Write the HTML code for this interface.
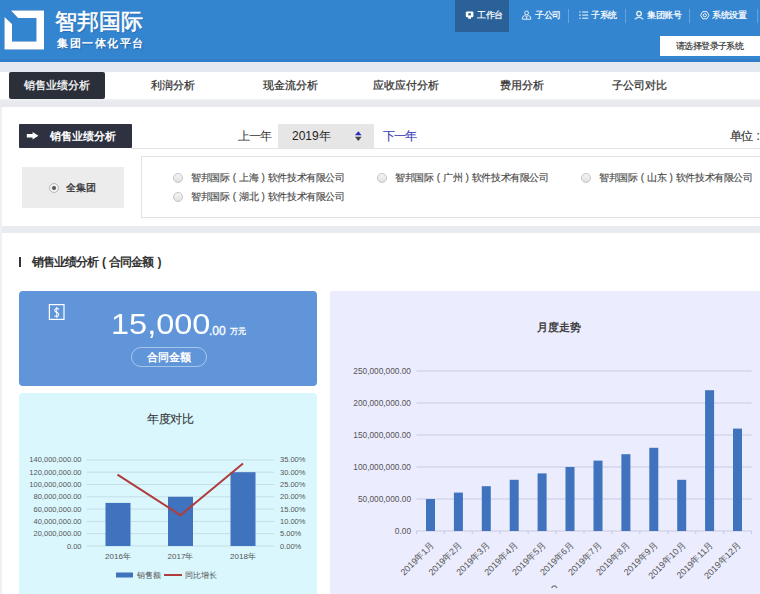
<!DOCTYPE html>
<html><head><meta charset="utf-8">
<style>
*{margin:0;padding:0;box-sizing:border-box}
html,body{width:760px;height:594px;overflow:hidden;background:#fff;font-family:"Liberation Sans",sans-serif;color:#333}
.a{position:absolute;white-space:nowrap}
#hdr{position:absolute;left:0;top:0;width:760px;height:62px;background:#3485d0}
#band1{position:absolute;left:0;top:62px;width:760px;height:10px;background:#e4e9f0}
#tabs{position:absolute;left:0;top:72px;width:760px;height:27px;background:#fff}
#band2{position:absolute;left:0;top:99px;width:760px;height:8px;background:linear-gradient(#eff1f4,#e7e9ee 35%,#e7e9ee)}
#band3{position:absolute;left:0;top:226px;width:760px;height:7px;background:#e8ebf0}
.tab{position:absolute;top:71px;height:29px;line-height:29px;font-size:11px;color:#333;-webkit-text-stroke:0.25px currentColor;text-align:center;width:116px}
.nav{position:absolute;top:0;height:32px;line-height:31px;font-size:9px;letter-spacing:-0.5px;color:#fff;-webkit-text-stroke:0.2px #fff}
.sep{position:absolute;top:9px;width:1px;height:14px;background:rgba(255,255,255,.25)}
.opt{position:absolute;font-size:10px;letter-spacing:-0.4px;color:#4a4a4a;-webkit-text-stroke:0.15px currentColor;line-height:12px}
.p{display:inline-block;width:9.6px;text-align:center;font-style:normal;font-family:"Liberation Sans",sans-serif}
.p2{display:inline-block;width:11px;text-align:center;font-style:normal}
.rad{position:absolute;width:10px;height:10px;border-radius:50%;border:1px solid #c4c4c4;background:linear-gradient(#f4f4f4,#e2e2e2)}
</style></head><body>
<div id="hdr"></div>
<div id="band1"></div>
<div id="tabs"></div>
<div id="band2"></div>
<div id="band3"></div>
<div class="a" style="left:0;top:107px;width:2px;height:487px;background:#eef0f3"></div>
<div class="a" style="left:0;top:59px;width:760px;height:3px;background:rgba(0,40,90,.07)"></div>

<!-- logo -->
<svg class="a" style="left:0;top:0;filter:drop-shadow(0.7px 0.7px 0.6px rgba(0,40,100,.45))" width="60" height="60" viewBox="0 0 60 60">
  <path d="M11 10.6 L44 10.6 L44 49.5 L4.5 49.5 L4.5 17 L12 24 L12 41.4 L36.4 41.4 L36.4 18 L18 18 Z" fill="#fff"/>
</svg>
<div class="a" style="left:55px;top:9px;font-size:22px;line-height:26px;color:#fff;-webkit-text-stroke:0.6px #fff;text-shadow:1px 1px 1px rgba(0,30,80,.3)">智邦国际</div>
<div class="a" style="left:57px;top:36px;font-size:11px;line-height:14px;color:#fff;font-weight:bold;letter-spacing:1.5px;text-shadow:1px 1px 1px rgba(0,30,80,.3)">集团一体化平台</div>

<!-- nav -->
<div class="a" style="left:455px;top:0;width:54px;height:32px;background:#2a6199"></div>
<div class="nav" style="left:477px">工作台</div>
<div class="nav" style="left:535px">子公司</div>
<div class="sep" style="left:568px"></div>
<div class="nav" style="left:591px">子系统</div>
<div class="sep" style="left:625px"></div>
<div class="nav" style="left:647px">集团账号</div>
<div class="sep" style="left:689px"></div>
<div class="nav" style="left:712px">系统设置</div>
<div class="sep" style="left:757px"></div>
<div class="a" style="left:660px;top:36px;width:110px;height:20px;background:#fff;font-size:9px;letter-spacing:-0.6px;line-height:20px;color:#333;padding-left:16px;-webkit-text-stroke:0.15px #333">请选择登录子系统</div>

<!-- tabs -->
<div class="a" style="left:9px;top:72px;width:96px;height:27px;background:#2b2f3a;border-radius:2px"></div>
<div class="tab" style="left:-1px;color:#fff">销售业绩分析</div>
<div class="tab" style="left:115px">利润分析</div>
<div class="tab" style="left:232px">现金流分析</div>
<div class="tab" style="left:348px">应收应付分析</div>
<div class="tab" style="left:464px">费用分析</div>
<div class="tab" style="left:581px">子公司对比</div>

<!-- filter -->
<div class="a" style="left:131px;top:148px;width:640px;height:1px;background:#e4e4e4"></div>
<div class="a" style="left:19px;top:124px;width:113px;height:24px;background:#2d3140;border-radius:1px"></div>
<div class="a" style="left:50px;top:124px;font-size:11px;line-height:24px;color:#fff;font-weight:bold">销售业绩分析</div>
<div class="a" style="left:237.5px;top:128px;font-size:12px;letter-spacing:-0.6px;line-height:17px;color:#333">上一年</div>
<div class="a" style="left:278px;top:124px;width:96px;height:24px;background:#e6e6e6"></div>
<div class="a" style="left:292px;top:128px;font-size:12px;line-height:17px;color:#222">2019年</div>
<div class="a" style="left:383px;top:127.5px;font-size:12px;letter-spacing:-1.1px;line-height:17px;color:#3a3cb8;-webkit-text-stroke:0.15px #3a3cb8">下一年</div>
<div class="a" style="left:730px;top:128px;font-size:12px;letter-spacing:-0.9px;line-height:17px;color:#333;-webkit-text-stroke:0.15px #333">单位<i class="p2" style="width:11px">:</i></div>

<div class="a" style="left:22px;top:167px;width:102px;height:41px;background:#ececec"></div>
<div class="rad" style="left:49px;top:182.5px;background:#f2f2f2;border-color:#b8b8b8"><div style="position:absolute;left:2px;top:2px;width:4px;height:4px;border-radius:50%;background:#555"></div></div>
<div class="a" style="left:66px;top:181px;font-size:10px;line-height:13px;color:#333;-webkit-text-stroke:0.3px #333">全集团</div>
<div class="a" style="left:141px;top:156px;width:640px;height:62px;border:1px solid #e2e2e2"></div>

<div class="rad" style="left:173px;top:173px"></div>
<div class="opt" style="left:191px;top:172px">智邦国际<i class="p">(</i>上海<i class="p">)</i>软件技术有限公司</div>
<div class="rad" style="left:377px;top:173px"></div>
<div class="opt" style="left:395px;top:172px">智邦国际<i class="p">(</i>广州<i class="p">)</i>软件技术有限公司</div>
<div class="rad" style="left:581px;top:173px"></div>
<div class="opt" style="left:599px;top:172px">智邦国际<i class="p">(</i>山东<i class="p">)</i>软件技术有限公司</div>
<div class="rad" style="left:173px;top:192px"></div>
<div class="opt" style="left:191px;top:191px">智邦国际<i class="p">(</i>湖北<i class="p">)</i>软件技术有限公司</div>

<!-- section title -->
<div class="a" style="left:19px;top:257px;width:2px;height:10px;background:#333"></div>
<div class="a" style="left:31.5px;top:255px;font-size:12px;letter-spacing:-0.9px;line-height:14px;color:#333;font-weight:bold">销售业绩分析<i class="p2">(</i>合同金额<i class="p2">)</i></div>

<!-- cards -->
<div class="a" style="left:19px;top:291px;width:298px;height:95px;background:#6096d9;border-radius:4px"></div>
<div class="a" style="left:19px;top:393px;width:298px;height:220px;background:#daf7fe;border-radius:4px"></div>
<div class="a" style="left:330px;top:291px;width:460px;height:320px;background:#ebecfd;border-radius:2px"></div>



<!-- nav icons -->
<svg class="a" style="left:0;top:0" width="760" height="160" viewBox="0 0 760 160">
  <g fill="#fff">
    <rect x="465.8" y="11.6" width="7.6" height="5.6" rx="1.2"/>
    <rect x="468.2" y="17" width="2.8" height="1.8"/>
  </g>
  <rect x="468.3" y="13.2" width="2.6" height="2.2" fill="#2a6199"/>
  <g fill="none" stroke="#e8f1fa" stroke-width="0.95">
    <circle cx="526.6" cy="12.9" r="1.9"/>
    <path d="M522.3 19.2 Q522.3 15.8 524.6 15.6 Q526.6 17.2 528.6 15.6 Q530.9 15.8 530.9 19.2 Z"/>
    <line x1="526.6" x2="526.6" y1="16.8" y2="19.2"/>
  </g>
  <g stroke="#e8f1fa" stroke-width="1.1">
    <line x1="579.2" x2="580.8" y1="12" y2="12"/><line x1="582.2" x2="588.2" y1="12" y2="12"/>
    <line x1="579.2" x2="580.8" y1="15.1" y2="15.1"/><line x1="582.2" x2="588.2" y1="15.1" y2="15.1"/>
    <line x1="579.2" x2="580.8" y1="18.2" y2="18.2"/><line x1="582.2" x2="588.2" y1="18.2" y2="18.2"/>
  </g>
  <g fill="none" stroke="#e8f1fa" stroke-width="1.3">
    <circle cx="639" cy="13.6" r="2.3"/>
    <path d="M634.8 19.4 Q639 14.8 643.2 19.4"/>
  </g>
  <g fill="none" stroke="#e8f1fa" stroke-width="1">
    <path d="M702.7 11.6 L706.9 11.6 L709 15.2 L706.9 18.8 L702.7 18.8 L700.6 15.2 Z"/>
    <circle cx="704.8" cy="15.2" r="1.6"/>
  </g>
  <!-- arrow -->
  <path d="M26.8 134 L32.6 134 L32.6 132 L38.4 135.8 L32.6 139.6 L32.6 137.6 L26.8 137.6 Z" fill="#fff"/>
  <!-- select arrows -->
  <path d="M355 135.3 L358.3 131.3 L361.6 135.3 Z" fill="#2b2bc8"/>
  <path d="M355 136.8 L358.3 141 L361.6 136.8 Z" fill="#444"/>
</svg>
<!-- blue card content -->
<svg class="a" style="left:0;top:0" width="80" height="330" viewBox="0 0 80 330">
  <rect x="49.4" y="304.6" width="14.6" height="14.8" fill="none" stroke="#fff" stroke-width="1.2"/>
  <path d="M58.9 309.2 Q56.9 307.9 55.4 308.9 Q54.1 310.2 55.3 311.5 Q56.5 312.4 57.8 313 Q59.3 314.2 58.4 315.6 Q56.8 317 54.6 315.7" fill="none" stroke="#fff" stroke-width="1.1"/>
  <line x1="56.7" x2="56.7" y1="306.9" y2="317.9" stroke="#fff" stroke-width="0.9"/>
</svg>
<div class="a" style="left:111px;top:308px;font-size:29px;line-height:32px;color:#fff;transform:scaleX(1.12);transform-origin:0 0">15,000</div>
<div class="a" style="left:209px;top:324px;font-size:12px;line-height:14px;color:#fff;-webkit-text-stroke:0.3px #fff">.00</div>
<div class="a" style="left:230px;top:325.5px;font-size:8px;line-height:12px;color:#fff;-webkit-text-stroke:0.3px #fff">万元</div>
<div class="a" style="left:131px;top:347px;width:76px;height:20px;border:1px solid rgba(255,255,255,.45);border-radius:10px;font-size:11px;line-height:18px;color:#fff;text-align:center;font-weight:bold">合同金额</div>

<div class="a" style="left:147px;top:411px;font-size:12px;letter-spacing:-0.5px;line-height:16px;color:#333;-webkit-text-stroke:0.1px #333">年度对比</div>
<div class="a" style="left:537px;top:319px;font-size:11px;line-height:16px;color:#333;-webkit-text-stroke:0.35px #333">月度走势</div>

<svg class="a" style="left:0;top:0" width="760" height="594" viewBox="0 0 760 594" font-family="Liberation Sans" >
<g font-size="7.5" fill="#555">
<line x1="86.5" x2="274" y1="546.0" y2="546.0" stroke="#c5dde6" stroke-width="1"/>
<text x="81.5" y="548.5" text-anchor="end">0.00</text>
<text x="280" y="548.5">0.00%</text>
<line x1="86.5" x2="274" y1="533.7" y2="533.7" stroke="#c5dde6" stroke-width="1"/>
<text x="81.5" y="536.2" text-anchor="end">20,000,000.00</text>
<text x="280" y="536.2">5.00%</text>
<line x1="86.5" x2="274" y1="521.4" y2="521.4" stroke="#c5dde6" stroke-width="1"/>
<text x="81.5" y="523.9" text-anchor="end">40,000,000.00</text>
<text x="280" y="523.9">10.00%</text>
<line x1="86.5" x2="274" y1="509.1" y2="509.1" stroke="#c5dde6" stroke-width="1"/>
<text x="81.5" y="511.6" text-anchor="end">60,000,000.00</text>
<text x="280" y="511.6">15.00%</text>
<line x1="86.5" x2="274" y1="496.8" y2="496.8" stroke="#c5dde6" stroke-width="1"/>
<text x="81.5" y="499.3" text-anchor="end">80,000,000.00</text>
<text x="280" y="499.3">20.00%</text>
<line x1="86.5" x2="274" y1="484.5" y2="484.5" stroke="#c5dde6" stroke-width="1"/>
<text x="81.5" y="487.0" text-anchor="end">100,000,000.00</text>
<text x="280" y="487.0">25.00%</text>
<line x1="86.5" x2="274" y1="472.2" y2="472.2" stroke="#c5dde6" stroke-width="1"/>
<text x="81.5" y="474.7" text-anchor="end">120,000,000.00</text>
<text x="280" y="474.7">30.00%</text>
<line x1="86.5" x2="274" y1="459.9" y2="459.9" stroke="#c5dde6" stroke-width="1"/>
<text x="81.5" y="462.4" text-anchor="end">140,000,000.00</text>
<text x="280" y="462.4">35.00%</text>
<rect x="105.5" y="502.9" width="25" height="43.1" fill="#4073bd"/>
<rect x="168.0" y="496.8" width="25" height="49.2" fill="#4073bd"/>
<rect x="230.5" y="472.2" width="25" height="73.8" fill="#4073bd"/>
<polyline points="117.5,474.6 180.5,515.2 243,463.4" fill="none" stroke="#b03c3c" stroke-width="2"/>
<text x="118" y="559" text-anchor="middle" font-size="8">2016年</text>
<text x="180.5" y="559" text-anchor="middle" font-size="8">2017年</text>
<text x="243" y="559" text-anchor="middle" font-size="8">2018年</text>
<rect x="116" y="572.5" width="17" height="5" fill="#4073bd"/>
<text x="136.5" y="578.3" font-size="8.3">销售额</text>
<line x1="164" x2="182" y1="575" y2="575" stroke="#b03c3c" stroke-width="2"/>
<text x="185" y="578.3" font-size="8.3">同比增长</text>
</g>
<g font-size="8.3" fill="#555">
<text x="411" y="534" text-anchor="end">0.00</text>
<line x1="416.5" x2="751.5" y1="499" y2="499" stroke="#c9cadf" stroke-width="1"/>
<text x="411" y="502" text-anchor="end">50,000,000.00</text>
<line x1="416.5" x2="751.5" y1="467" y2="467" stroke="#c9cadf" stroke-width="1"/>
<text x="411" y="470" text-anchor="end">100,000,000.00</text>
<line x1="416.5" x2="751.5" y1="435" y2="435" stroke="#c9cadf" stroke-width="1"/>
<text x="411" y="438" text-anchor="end">150,000,000.00</text>
<line x1="416.5" x2="751.5" y1="403" y2="403" stroke="#c9cadf" stroke-width="1"/>
<text x="411" y="406" text-anchor="end">200,000,000.00</text>
<line x1="416.5" x2="751.5" y1="371" y2="371" stroke="#c9cadf" stroke-width="1"/>
<text x="411" y="374" text-anchor="end">250,000,000.00</text>
<line x1="416.5" x2="751.5" y1="531" y2="531" stroke="#c9cadf" stroke-width="1"/>
<line x1="416.5" x2="416.5" y1="531" y2="534" stroke="#c9cadf" stroke-width="1"/>
<line x1="444.4" x2="444.4" y1="531" y2="534" stroke="#c9cadf" stroke-width="1"/>
<line x1="472.3" x2="472.3" y1="531" y2="534" stroke="#c9cadf" stroke-width="1"/>
<line x1="500.2" x2="500.2" y1="531" y2="534" stroke="#c9cadf" stroke-width="1"/>
<line x1="528.2" x2="528.2" y1="531" y2="534" stroke="#c9cadf" stroke-width="1"/>
<line x1="556.1" x2="556.1" y1="531" y2="534" stroke="#c9cadf" stroke-width="1"/>
<line x1="584.0" x2="584.0" y1="531" y2="534" stroke="#c9cadf" stroke-width="1"/>
<line x1="611.9" x2="611.9" y1="531" y2="534" stroke="#c9cadf" stroke-width="1"/>
<line x1="639.8" x2="639.8" y1="531" y2="534" stroke="#c9cadf" stroke-width="1"/>
<line x1="667.8" x2="667.8" y1="531" y2="534" stroke="#c9cadf" stroke-width="1"/>
<line x1="695.7" x2="695.7" y1="531" y2="534" stroke="#c9cadf" stroke-width="1"/>
<line x1="723.6" x2="723.6" y1="531" y2="534" stroke="#c9cadf" stroke-width="1"/>
<line x1="751.5" x2="751.5" y1="531" y2="534" stroke="#c9cadf" stroke-width="1"/>
<rect x="426.0" y="499.0" width="9" height="32.0" fill="#4073bd"/>
<text font-size="9" transform="translate(434.7,545.5) rotate(-45)" text-anchor="end">2019年1月</text>
<rect x="453.9" y="492.6" width="9" height="38.4" fill="#4073bd"/>
<text font-size="9" transform="translate(462.6,545.5) rotate(-45)" text-anchor="end">2019年2月</text>
<rect x="481.8" y="486.2" width="9" height="44.8" fill="#4073bd"/>
<text font-size="9" transform="translate(490.5,545.5) rotate(-45)" text-anchor="end">2019年3月</text>
<rect x="509.7" y="479.8" width="9" height="51.2" fill="#4073bd"/>
<text font-size="9" transform="translate(518.4,545.5) rotate(-45)" text-anchor="end">2019年4月</text>
<rect x="537.6" y="473.4" width="9" height="57.6" fill="#4073bd"/>
<text font-size="9" transform="translate(546.3,545.5) rotate(-45)" text-anchor="end">2019年5月</text>
<rect x="565.5" y="467.0" width="9" height="64.0" fill="#4073bd"/>
<text font-size="9" transform="translate(574.2,545.5) rotate(-45)" text-anchor="end">2019年6月</text>
<rect x="593.5" y="460.6" width="9" height="70.4" fill="#4073bd"/>
<text font-size="9" transform="translate(602.2,545.5) rotate(-45)" text-anchor="end">2019年7月</text>
<rect x="621.4" y="454.2" width="9" height="76.8" fill="#4073bd"/>
<text font-size="9" transform="translate(630.1,545.5) rotate(-45)" text-anchor="end">2019年8月</text>
<rect x="649.3" y="447.8" width="9" height="83.2" fill="#4073bd"/>
<text font-size="9" transform="translate(658.0,545.5) rotate(-45)" text-anchor="end">2019年9月</text>
<rect x="677.2" y="479.8" width="9" height="51.2" fill="#4073bd"/>
<text font-size="9" transform="translate(685.9,545.5) rotate(-45)" text-anchor="end">2019年10月</text>
<rect x="705.1" y="390.2" width="9" height="140.8" fill="#4073bd"/>
<text font-size="9" transform="translate(713.8,545.5) rotate(-45)" text-anchor="end">2019年11月</text>
<rect x="733.0" y="428.6" width="9" height="102.4" fill="#4073bd"/>
<text font-size="9" transform="translate(741.7,545.5) rotate(-45)" text-anchor="end">2019年12月</text>
</g>
<path d="M551.5 587.8 Q554.3 583.8 557.1 587.8" fill="none" stroke="#777" stroke-width="1.2"/>
</svg>
</body></html>
